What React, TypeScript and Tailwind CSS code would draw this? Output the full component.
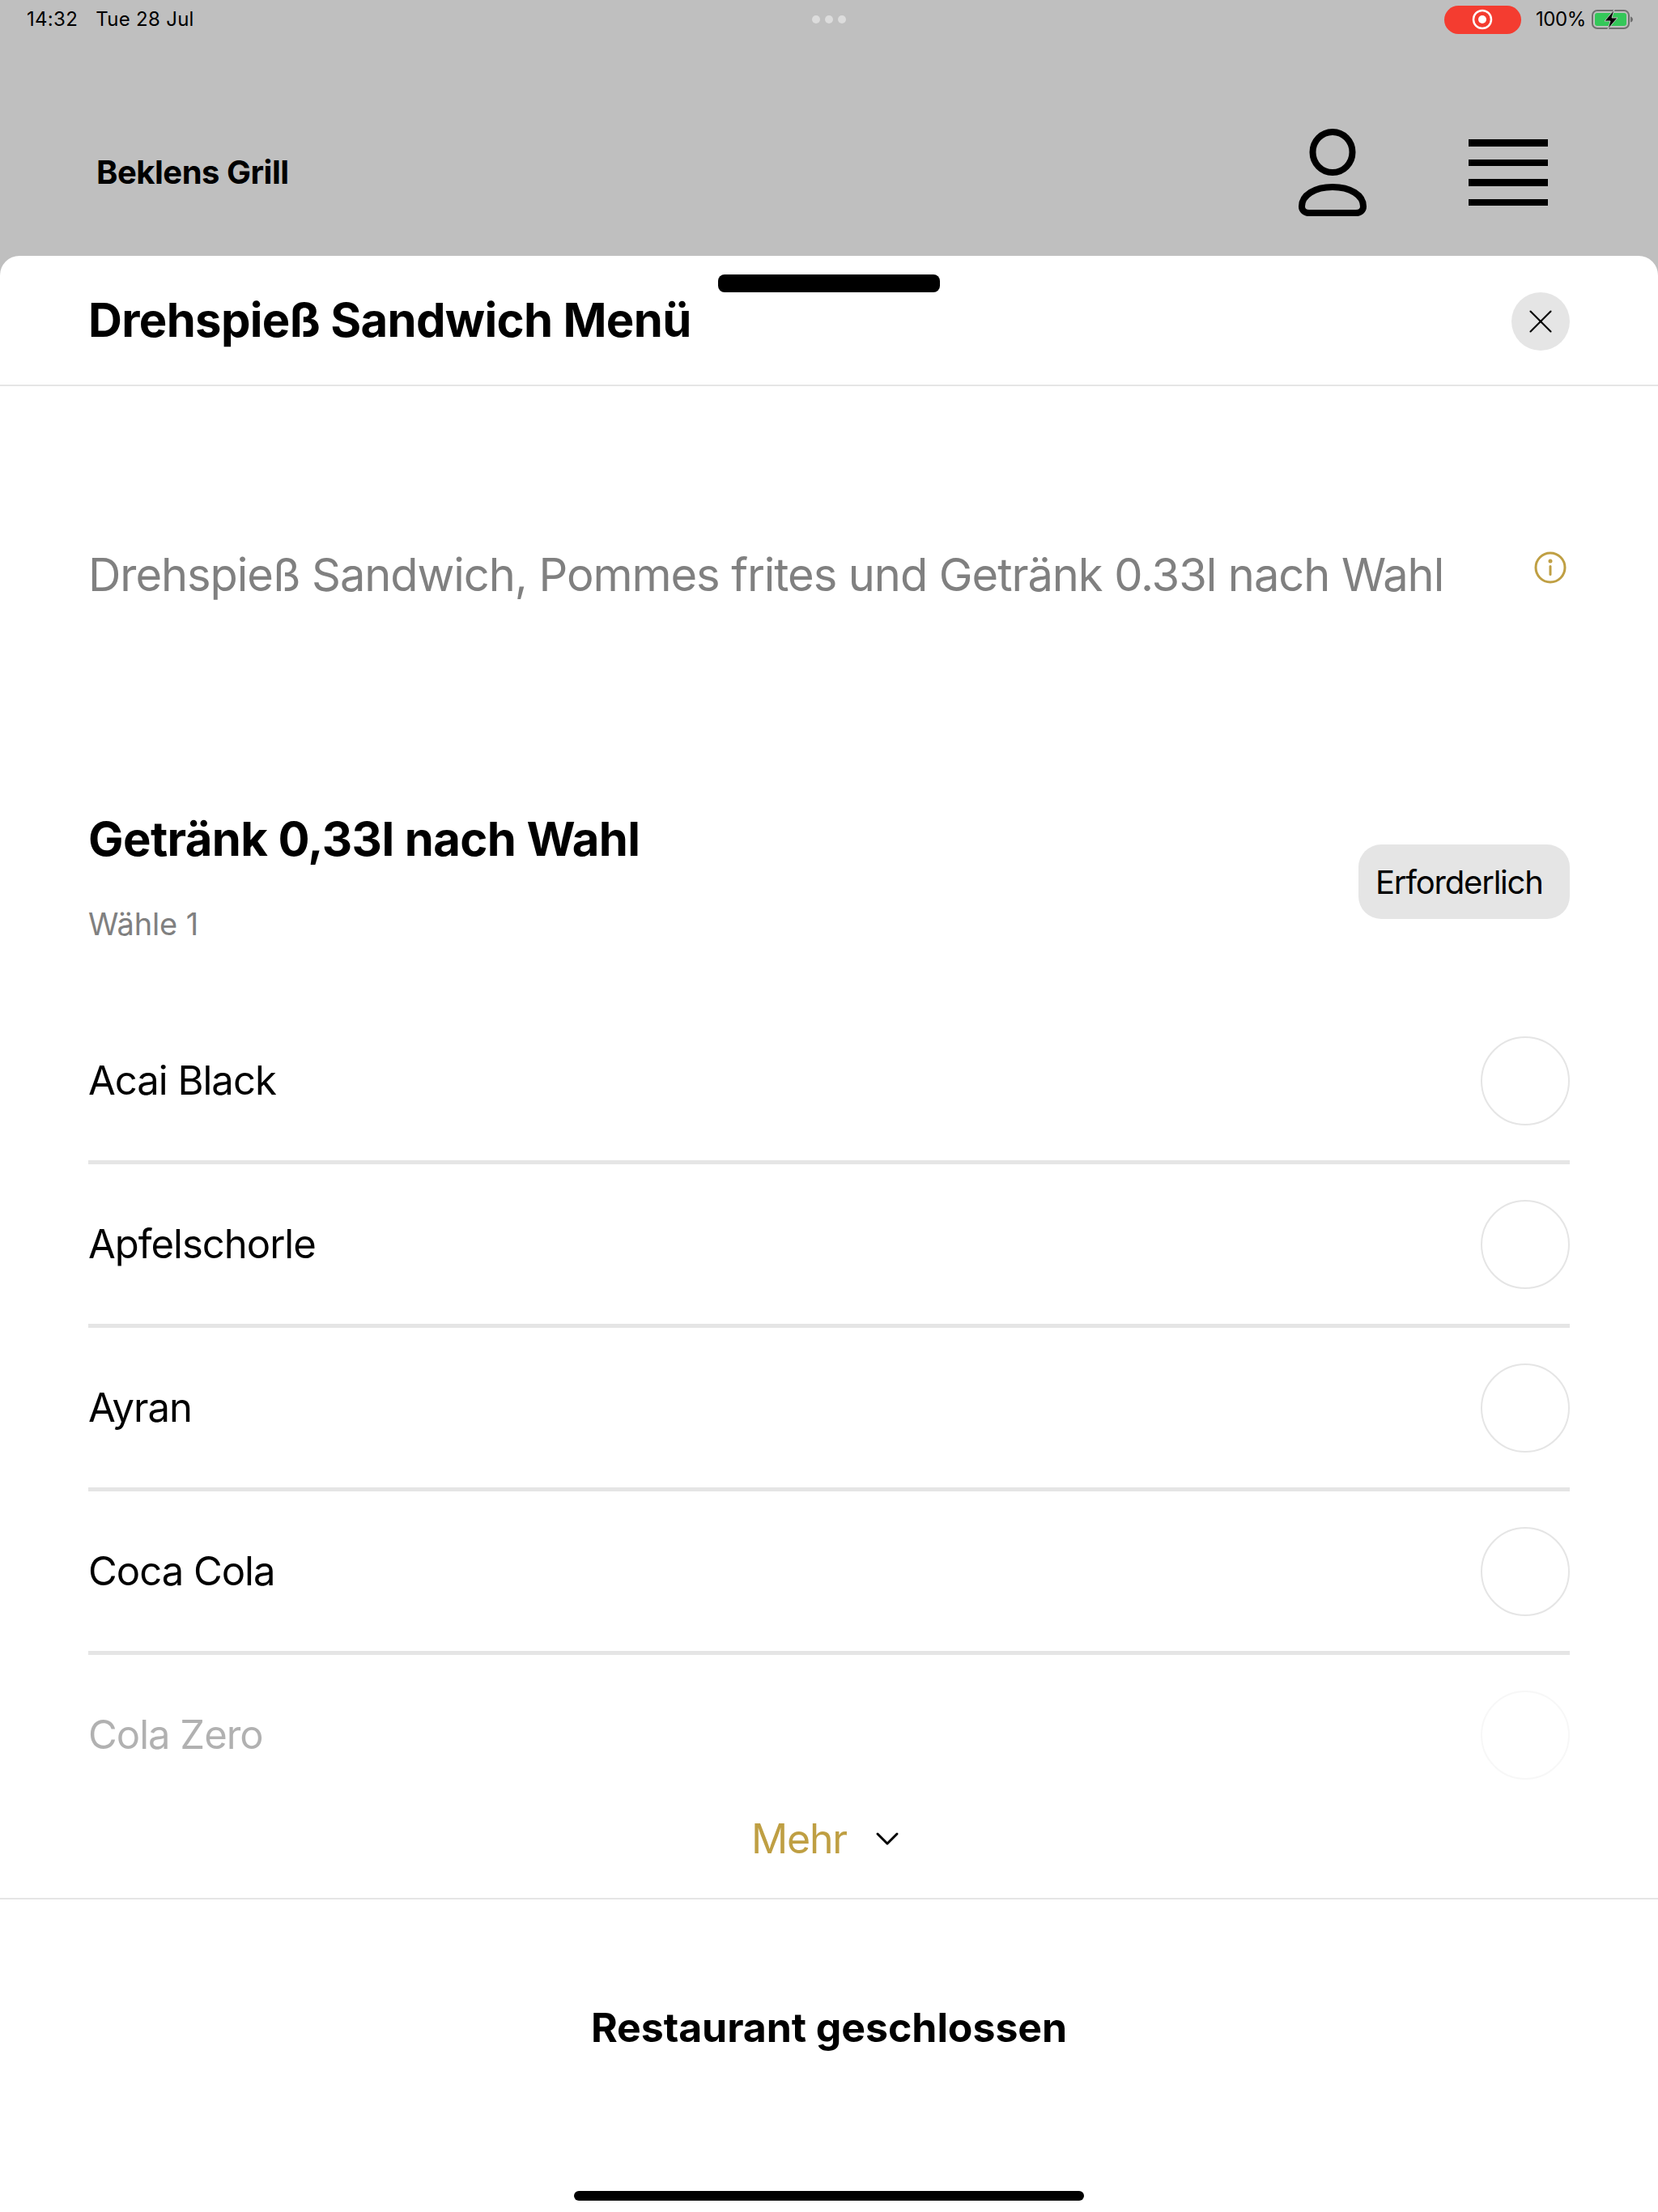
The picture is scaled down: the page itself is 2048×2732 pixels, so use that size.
import { ChevronDown, X } from "lucide-react";

const drinks = ["Acai Black", "Apfelschorle", "Ayran", "Coca Cola", "Cola Zero"];

function StatusBar() {
    return (
        <div className="relative flex h-[48px] items-center justify-between pl-[33px] pr-[30px] text-[24px] text-black">
            <div className="flex gap-[22px] tracking-[0.3px]">
                <span>14:32</span>
                <span>Tue 28 Jul</span>
            </div>
            {/* multitasking dots */}
            <div className="absolute left-[1003px] top-[19px] flex gap-[6px]">
                <span className="h-[10px] w-[10px] rounded-full bg-[#dcdcdc]" />
                <span className="h-[10px] w-[10px] rounded-full bg-[#dcdcdc]" />
                <span className="h-[10px] w-[10px] rounded-full bg-[#dcdcdc]" />
            </div>
            <div className="flex items-center">
                <div className="mr-[18px] flex h-[35px] w-[95px] items-center justify-center rounded-full bg-[#f43c30]">
                    <svg width="28" height="28" viewBox="0 0 28 28">
                        <circle cx="14" cy="14" r="11" fill="none" stroke="white" strokeWidth="2.5" />
                        <circle cx="14" cy="14" r="5" fill="white" />
                    </svg>
                </div>
                <span className="mr-[7px] tracking-[-0.4px]">100%</span>
                <svg width="52" height="26" viewBox="0 0 52 26">
                    <rect x="1" y="2" width="45" height="22" rx="6" fill="none" stroke="#6f6f6f" strokeWidth="2" />
                    <rect x="4" y="5" width="39" height="16" rx="3" fill="#34c759" />
                    <path d="M48 9.5c2 .5 3 2 3 3.5s-1 3-3 3.5z" fill="#6f6f6f" />
                    <path d="M28 1 16 15h7l-3 10 12-14h-7z" fill="black" stroke="#bfbfbf" strokeWidth="1" />
                </svg>
            </div>
        </div>
    );
}

function TopBar() {
    return (
        <div className="flex h-[268px] items-start pl-[119px]">
            <h2 className="mt-[141px] text-[40px] leading-[48px] font-bold tracking-[-0.5px] text-black">Beklens Grill</h2>
            <div className="ml-auto mr-[136px] mt-[111px] flex items-start gap-[126px]">
                <svg width="84" height="108" viewBox="0 0 84 108" fill="none" stroke="black" strokeWidth="8">
                    <ellipse cx="42" cy="29" rx="24.5" ry="25" />
                    <path d="M42 72c-22 0-38 10-38 24 0 5 4 8 9 8h58c5 0 9-3 9-8 0-14-16-24-38-24z" />
                </svg>
                <div className="mt-[13px] flex w-[98px] flex-col gap-[16px]">
                    <span className="h-[8.5px] bg-black" />
                    <span className="h-[8.5px] bg-black" />
                    <span className="h-[8.5px] bg-black" />
                    <span className="h-[8.5px] bg-black" />
                </div>
            </div>
        </div>
    );
}

function DrinkRow({ name, last }: { name: string; last: boolean }) {
    return (
        <div className={`flex h-[202px] items-center justify-between ${last ? "pb-[5px] opacity-30" : "border-b-[5px] border-[#e5e5e5]"}`}>
            <span className="text-[49px] tracking-[-1px] text-black">{name}</span>
            <span className="h-[110px] w-[110px] rounded-full border-2 border-[#e5e5e5]" />
        </div>
    );
}

export default function App() {
    return (
        <div className="flex h-[2732px] w-[2048px] flex-col overflow-hidden bg-[#bfbfbf] font-['Inter',sans-serif]">
            <StatusBar />
            <TopBar />

            {/* Sheet */}
            <div className="relative flex flex-1 flex-col overflow-hidden rounded-t-[24px] bg-white">
                <div className="absolute left-[887px] top-[23px] h-[22px] w-[274px] rounded-[8px] bg-black" />

                <div className="flex h-[161px] shrink-0 items-center justify-between border-b-2 border-[#e5e5e5] px-[109px]">
                    <h1 className="text-[58px] font-bold tracking-[-0.67px] text-black">Drehspieß Sandwich Menü</h1>
                    <button className="mt-[3px] flex h-[72px] w-[72px] items-center justify-center rounded-full bg-[#e5e5e5]">
                        <X size={50} strokeWidth={1} color="black" />
                    </button>
                </div>

                <div className="relative flex-1 overflow-hidden px-[109px]">
                    <div className="mt-[189px] flex items-start justify-between">
                        <p className="text-[56px] leading-[88px] tracking-[-1.06px] text-[#808080]">Drehspieß Sandwich, Pommes frites und Getränk 0.33l nach Wahl</p>
                        <svg className="mr-[4px] mt-[15px]" width="40" height="40" viewBox="0 0 40 40" fill="none" stroke="#bf9f43" strokeWidth="3">
                            <circle cx="20" cy="20" r="18" />
                            <path d="M20 18.5v10" strokeLinecap="round" />
                            <circle cx="20" cy="12" r="1" fill="#bf9f43" />
                        </svg>
                    </div>

                    <div className="mt-[247px] flex items-start justify-between">
                        <div>
                            <h2 className="text-[58px] leading-[70px] font-bold tracking-[-0.6px] text-black">Getränk 0,33l nach Wahl</h2>
                            <p className="mt-[46px] text-[38px] leading-[48px] tracking-[-0.1px] text-[#808080]">Wähle 1</p>
                        </div>
                        <span className="mt-[42px] flex h-[92px] w-[261px] items-center rounded-[28px] bg-[#e5e5e5] pl-[21px] pt-[2px] text-[40px] tracking-[-1.2px] text-black">Erforderlich</span>
                    </div>

                    <div className="mt-[71px]">
                        {drinks.map((d, i) => (
                            <DrinkRow key={d} name={d} last={i === drinks.length - 1} />
                        ))}
                    </div>

                    {/* covers the rest of the cut-off list */}
                    <div className="absolute inset-x-0 bottom-0 flex h-[140px] items-end justify-center bg-white pb-[41px]">
                        <div className="flex items-center">
                            <span className="text-[50px] leading-[64px] tracking-[-1.2px] text-[#bf9f43]">Mehr</span>
                            <ChevronDown className="ml-[26px]" size={48} strokeWidth={1.5} color="black" />
                        </div>
                    </div>
                </div>

                <div className="flex h-[388px] shrink-0 flex-col items-center border-t-2 border-[#e5e5e5]">
                    <span className="mt-[128px] text-[50px] leading-[60px] font-bold tracking-[-0.07px] text-black">Restaurant geschlossen</span>
                    <span className="mt-auto mb-[14px] h-[12px] w-[630px] rounded-[6px] bg-black" />
                </div>
            </div>
        </div>
    );
}
